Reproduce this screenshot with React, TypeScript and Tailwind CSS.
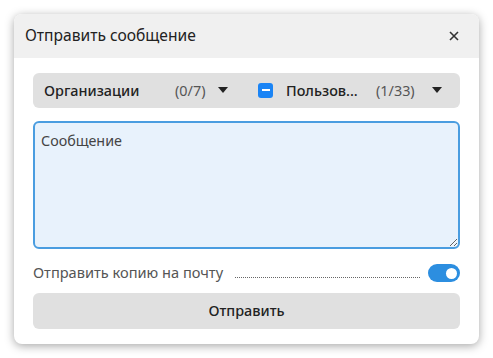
import { useState } from "react";

const Caret = () => (
  <svg width="10" height="6" viewBox="0 0 10 6" className="shrink-0">
    <path d="M0 0 L10 0 L5 6 Z" fill="#222" />
  </svg>
);

const App = () => {
  const [copy, setCopy] = useState(true);

  return (
    <div className="w-[493px] h-[358px] bg-white p-[14px] pb-[14px]" style={{ fontFamily: '"Noto Sans", sans-serif' }}>
      <div className="w-[465px] h-[330px] rounded-lg bg-white overflow-hidden shadow-[0_2px_10px_rgba(0,0,0,0.35)] flex flex-col">
        {/* Header */}
        <div className="h-[44px] bg-[#f0f0f0] flex items-center justify-between pl-[11px] pr-[20px]">
          <span className="text-[15.6px] text-[#222]">Отправить сообщение</span>
          <svg width="10" height="10" viewBox="0 0 10 10">
            <path d="M1 1 L9 9 M9 1 L1 9" stroke="#333" strokeWidth="1.6" />
          </svg>
        </div>

        <div className="flex flex-col px-[19px] pt-[15px]">
          {/* Filters */}
          <div className="h-[35px] bg-[#e0e0e0] rounded-md flex items-center text-[14.4px]">
            <div className="flex items-center w-[211px] pl-[11px]">
              <span className="font-medium text-[#222] w-[131px]">Организации</span>
              <span className="text-[#555] w-[43px]">(0/7)</span>
              <Caret />
            </div>
            <div className="flex items-center pl-[14px]">
              <div className="w-[15px] h-[15px] rounded-[3px] bg-[#1a84f5] flex items-center justify-center mr-[13px]">
                <div className="w-[8px] h-[2px] bg-white" />
              </div>
              <span className="font-medium text-[#222] w-[90px]">Пользов...</span>
              <span className="text-[#555] w-[56px]">(1/33)</span>
              <Caret />
            </div>
          </div>

          {/* Message */}
          <textarea
            placeholder="Сообщение"
            className="mt-[13px] h-[128px] w-full resize-y rounded-md border-2 border-[#4a9de0] bg-[#e8f2fc] px-[6px] py-[7px] text-[14.3px] text-[#333] placeholder:text-[#444] outline-none"
          />

          {/* Copy to email */}
          <div className="mt-[15px] flex items-center h-[18px]">
            <span className="text-[14.6px] text-[#555] shrink-0">Отправить копию на почту</span>
            <div className="flex-1 ml-[12px] mr-[8px] mt-[8px] border-b border-dotted border-[#666]" />
            <button
              onClick={() => setCopy(!copy)}
              className={`w-[32px] h-[18px] rounded-full flex items-center px-[3px] ${copy ? "bg-[#2c8ee0] justify-end" : "bg-[#bbb] justify-start"}`}
            >
              <div className="w-[11px] h-[11px] rounded-full bg-white" />
            </button>
          </div>

          {/* Submit */}
          <button className="mt-[11px] h-[36px] w-full rounded-md bg-[#e0e0e0] text-[14.4px] font-medium text-[#222]">
            Отправить
          </button>
        </div>
      </div>
    </div>
  );
};

export default App;
